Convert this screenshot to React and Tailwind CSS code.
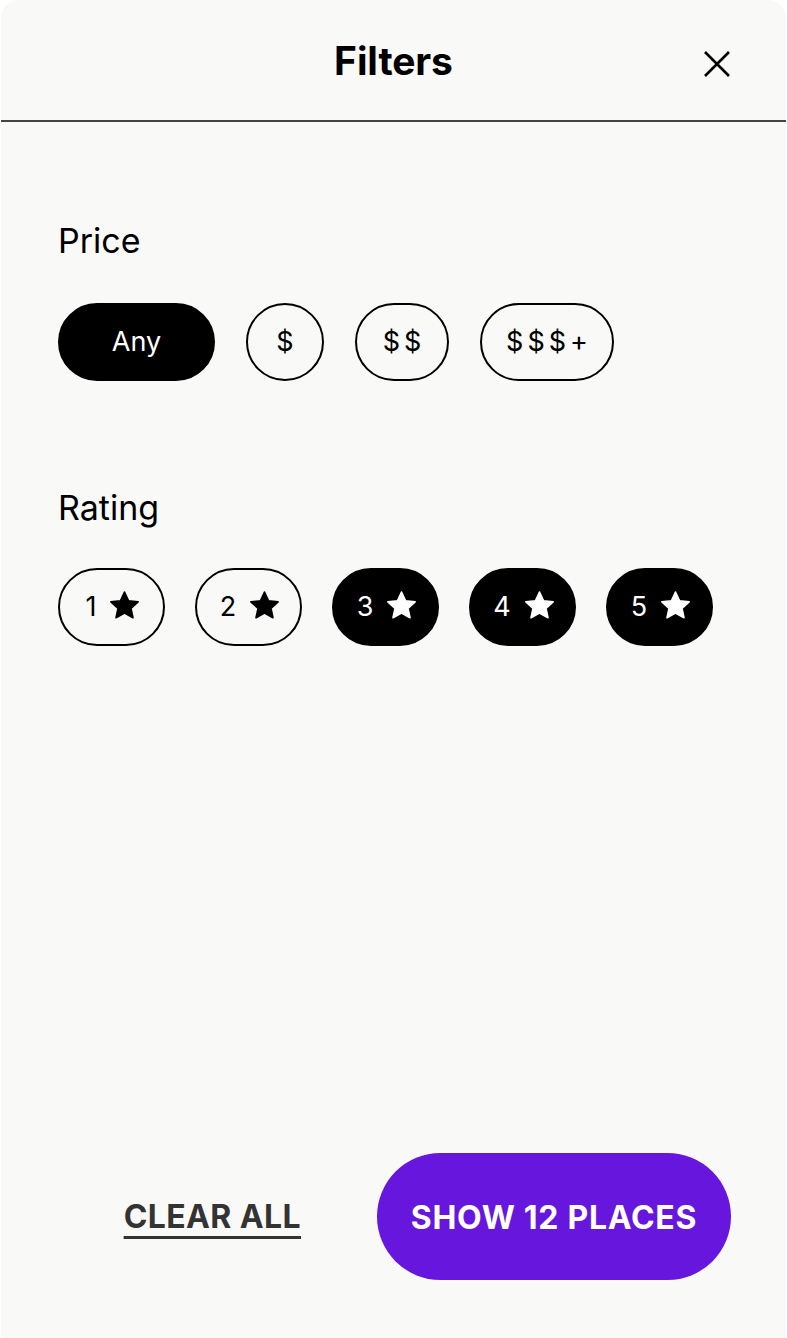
import React from 'react';

const font = { fontFamily: 'Inter, "Noto Sans", sans-serif' };

const StarIcon = ({ className }) => (
    <svg viewBox="0 0 24 24" className={className} fill="currentColor">
        <path d="M12 2.2l2.95 6.4 6.95.75-5.2 4.7 1.45 6.85L12 17.4l-6.15 3.5 1.45-6.85-5.2-4.7 6.95-.75z" strokeLinejoin="round" stroke="currentColor" strokeWidth="1.2" />
    </svg>
);

const CloseIcon = () => (
    <svg viewBox="0 0 26 26" className="w-[26px] h-[26px]" fill="none" stroke="black" strokeWidth="2.6">
        <path d="M1 1l24 24M25 1L1 25" />
    </svg>
);

const priceOptions = [
    { label: 'Any', width: 'w-[157px]', active: true },
    { label: '$', width: 'w-[78px]', active: false },
    { label: '$$', width: 'w-[94px]', active: false },
    { label: '$$$+', width: 'w-[134px]', active: false },
];

const ratingOptions = [
    { value: 1, active: false },
    { value: 2, active: false },
    { value: 3, active: true },
    { value: 4, active: true },
    { value: 5, active: true },
];

const Chip = ({ active, className, children }) => (
    <button
        className={`h-[78px] rounded-full border-2 border-black flex items-center justify-center text-[27px] ${active ? 'bg-black text-white' : 'bg-transparent text-black'} ${className}`}
    >
        {children}
    </button>
);

export default function App() {
    return (
        <div className="min-h-screen bg-white" style={font}>
            <div className="min-h-[1338px] bg-[#f9f9f7] rounded-t-[18px] mx-[1px] flex flex-col">
                {/* header */}
                <div className="h-[122px] relative flex items-center justify-center border-b-2 border-[#444]">
                    <h1 className="text-[39px] font-bold text-black tracking-[-0.1px] mt-[2px]">Filters</h1>
                    <button className="absolute right-[56px] top-[51px]">
                        <CloseIcon />
                    </button>
                </div>

                <div className="flex-1 px-[57px] pt-[99px]">
                    <h2 className="text-[34px] leading-[40px] text-black">Price</h2>
                    <div className="mt-[42px] flex gap-[31px]">
                        {priceOptions.map((p) => (
                            <Chip key={p.label} active={p.active} className={`${p.width} ${p.label === 'Any' ? '' : 'tracking-[4px]'}`}>
                                <span className={p.label === 'Any' ? '' : 'pl-[4px]'}>{p.label}</span>
                            </Chip>
                        ))}
                    </div>

                    <h2 className="mt-[107px] text-[34px] leading-[40px] text-black">Rating</h2>
                    <div className="mt-[40px] flex gap-[30px]">
                        {ratingOptions.map((r) => (
                            <Chip key={r.value} active={r.active} className="w-[107px] gap-[12px] pl-[4px]">
                                <span>{r.value}</span>
                                <StarIcon className="w-[33px] h-[33px] -mt-[3px]" />
                            </Chip>
                        ))}
                    </div>
                </div>

                {/* footer */}
                <div className="flex items-center justify-end gap-[76px] pr-[55px] pb-[58px]">
                    <button className="text-[32px] font-bold text-[#333] underline decoration-[3px] underline-offset-[8px] tracking-[0.4px]">
                        CLEAR ALL
                    </button>
                    <button className="h-[127px] w-[354px] rounded-full bg-[#6616dd] text-white text-[32px] font-bold tracking-[0.7px] pt-[2px]">
                        SHOW 12 PLACES
                    </button>
                </div>
            </div>
        </div>
    );
}
